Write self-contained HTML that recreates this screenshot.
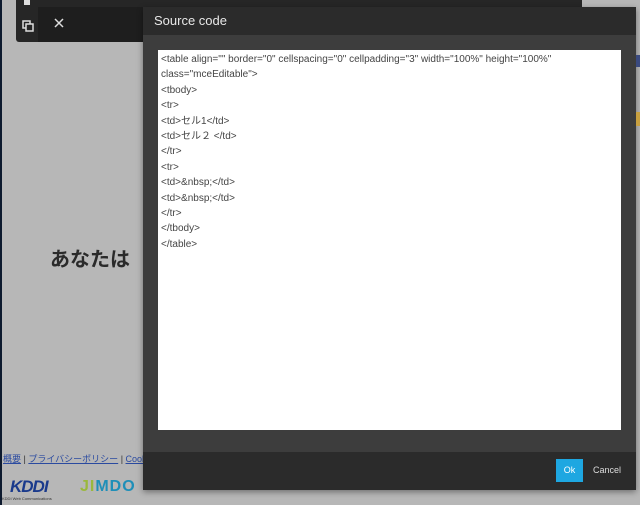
<!DOCTYPE html>
<html><head><meta charset="utf-8"><style>
body{margin:0;width:640px;height:505px;overflow:hidden;background:#b7b7b7;position:relative;font-family:"Liberation Sans","Noto Sans CJK JP",sans-serif}
.lb{position:absolute;left:0;top:0;width:2px;height:505px;background:#0d1a2e}
.topbar{position:absolute;left:16px;top:0;width:566px;height:42px;background:#262626;border-radius:0 0 3px 3px}
.tab{position:absolute;left:38px;top:7px;width:110px;height:35px;background:#1e1e1e}
.dlg{position:absolute;left:143px;top:7px;width:493px;height:483px;background:#3d3d3d;box-shadow:0 2px 6px rgba(0,0,0,.4)}
.hd{height:28px;background:#2b2b2b;color:#e8e8e8;font-size:13px;line-height:28px;padding-left:11px}
.ta{position:absolute;left:15px;top:43px;width:463px;height:380px;background:#fff;font-size:10px;color:#444;line-height:15.4px;padding:2px 0 0 3px;box-sizing:border-box;font-family:"Liberation Sans","Noto Sans CJK JP",sans-serif}
.ft{position:absolute;left:0;bottom:0;width:100%;height:38px;background:#2b2b2b}
.ok{position:absolute;left:413px;top:7px;width:27px;height:23px;background:#1ea7e1;color:#fff;font-size:9px;line-height:23px;text-align:center}
.cc{position:absolute;left:450px;top:7px;color:#ddd;font-size:9px;line-height:23px}
.lk{position:absolute;left:3px;top:452px;font-size:9px;color:#333;white-space:nowrap}
.lk a{color:#2a4aa0;text-decoration:underline}
</style></head><body>
<div class="lb"></div>
<div class="topbar">
<div style="position:absolute;left:8px;top:0;width:6px;height:5px;background:#ddd"></div>
<svg style="position:absolute;left:6px;top:20px" width="12" height="12" viewBox="0 0 12 12"><rect x="1" y="1" width="7" height="7" fill="none" stroke="#ddd" stroke-width="1.5"/><rect x="4" y="4" width="7" height="7" fill="#262626" stroke="#ddd" stroke-width="1.5"/></svg>
</div>
<div class="tab"><svg style="position:absolute;left:16px;top:11px" width="10" height="10" viewBox="0 0 10 10"><path d="M1 1L9 9M9 1L1 9" stroke="#ddd" stroke-width="1.5"/></svg></div>
<div style="position:absolute;left:50px;top:243px;font-size:20px;font-weight:bold;color:#2a2a2a">あなたは</div>
<div class="lk"><a>概要</a> | <a>プライバシーポリシー</a> | <a>Cookie</a></div>
<div style="position:absolute;left:10px;top:477px;font-size:17px;font-weight:bold;font-style:italic;color:#1a3a8c;letter-spacing:-1px">KDDI</div>
<div style="position:absolute;left:2px;top:496px;font-size:4px;color:#333">KDDI Web Communications</div>
<div style="position:absolute;left:80px;top:478px;font-size:16px;font-weight:bold;color:#9ab83c;letter-spacing:1px">JI<span style="color:#1f8fb8">MDO</span></div>
<div class="dlg">
<div class="hd">Source code</div>
<div class="ta">&lt;table align="" border="0" cellspacing="0" cellpadding="3" width="100%" height="100%"<br>class="mceEditable"&gt;<br>&lt;tbody&gt;<br>&lt;tr&gt;<br>&lt;td&gt;セル1&lt;/td&gt;<br>&lt;td&gt;セル２ &lt;/td&gt;<br>&lt;/tr&gt;<br>&lt;tr&gt;<br>&lt;td&gt;&amp;nbsp;&lt;/td&gt;<br>&lt;td&gt;&amp;nbsp;&lt;/td&gt;<br>&lt;/tr&gt;<br>&lt;/tbody&gt;<br>&lt;/table&gt;</div>
<div class="ft"><div class="ok">Ok</div><div class="cc">Cancel</div></div>
</div>
<div style="position:absolute;left:636px;top:55px;width:4px;height:12px;background:#3a4a80"></div>
<div style="position:absolute;left:636px;top:112px;width:4px;height:14px;background:#c8a040"></div>
</body></html>
